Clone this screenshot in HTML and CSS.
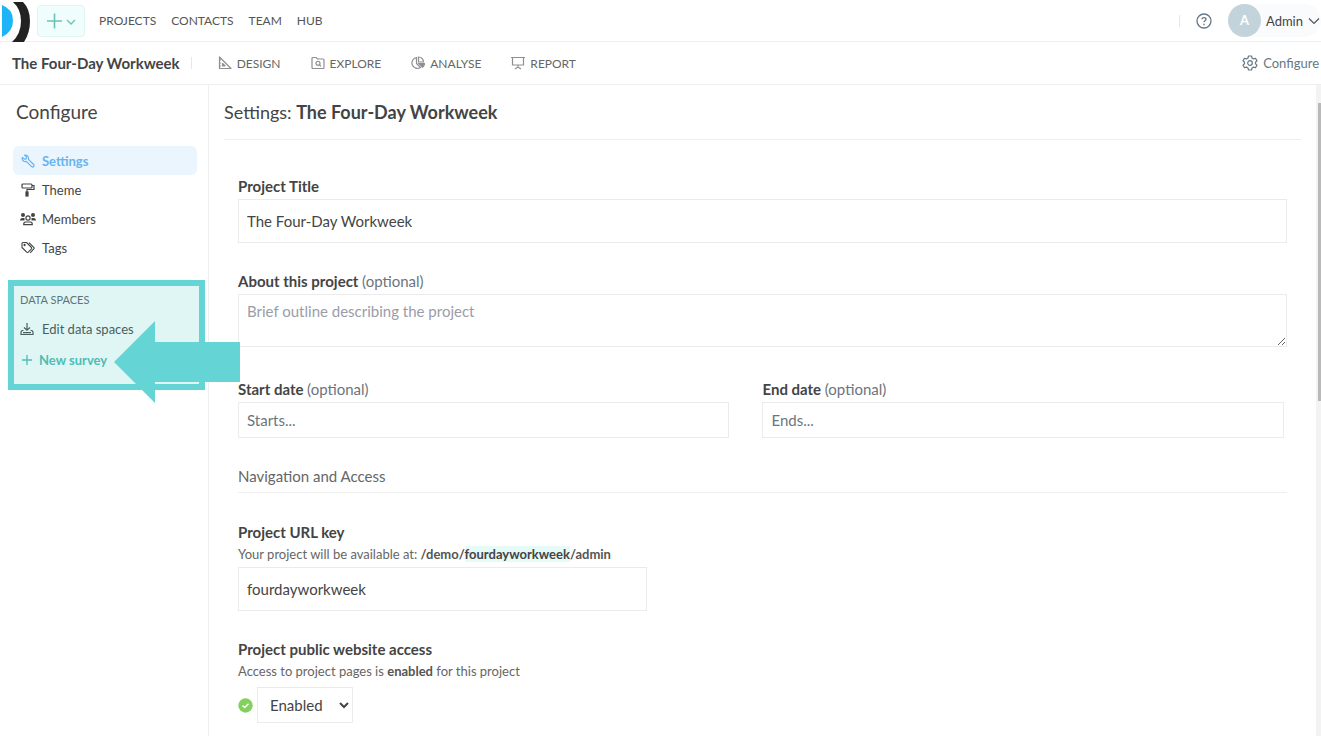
FILE: index.html
```html
<!DOCTYPE html>
<html lang="en">
<head>
  <meta charset="utf-8">
  <title>Configure - The Four-Day Workweek</title>
  <link rel="stylesheet" href="styles.css">
</head>
<body>
  <header class="topbar">
    <a class="logo" href="#" aria-label="Home">
      <svg width="30" height="42" viewBox="0 0 30 42">
        <path d="M2 5Q13 9 13 20.500Q13 32 2 37Z" fill="#1eb5f8"/>
        <path d="M13 2H23Q30 9 30 21Q30 33 24 42H12Q21 34 21 21Q21 9 13 2Z" fill="#222"/>
      </svg>
    </a>
    <button class="add-button" type="button" aria-label="Add">
      <svg width="32" height="18" viewBox="0 0 32 18" fill="none" stroke="#6fc0b6">
        <path d="M2 9H17M9.500 1.500V16.500" stroke-width="1.600"/>
        <path d="M22 8L26 12L30 8" stroke-width="1.300"/>
      </svg>
    </button>
    <nav class="main-nav">
      <a href="#">PROJECTS</a>
      <a href="#">CONTACTS</a>
      <a href="#">TEAM</a>
      <a href="#">HUB</a>
    </nav>
    <div class="user-area">
      <span class="divider"></span>
      <a class="help-link" href="#" aria-label="Help">
        <svg width="16" height="16" viewBox="0 0 16 16" fill="none" stroke="#667785" stroke-width="1.300">
          <circle cx="8" cy="8" r="7"/>
          <path d="M6 6.300C6 4 10 4 10 6.300C10 7.700 8 7.700 8 9.200M8 10.800V12.200"/>
        </svg>
      </a>
      <button class="user-button" type="button">
        <span class="avatar">A</span>
        <span>Admin</span>
        <svg width="12" height="8" viewBox="0 0 12 8" fill="none" stroke="#555" stroke-width="1.200"><path d="M1 1.500L6 6.500L11 1.500"/></svg>
      </button>
    </div>
  </header>

  <div class="projectbar">
    <strong class="project-name">The Four-Day Workweek</strong>
    <span class="divider"></span>
    <nav class="project-nav">
      <a href="#">
        <svg width="14" height="14" viewBox="0 0 14 14" fill="none" stroke="#8f8f8f" stroke-width="1.200" stroke-linejoin="round"><path d="M1.500 1V12.500H13ZM4.500 7.500V9.800H7ZM1.500 4H3M1.500 7H3M1.500 10H3"/></svg>
        DESIGN
      </a>
      <a href="#">
        <svg width="14" height="14" viewBox="0 0 14 14" fill="none" stroke="#8f8f8f" stroke-width="1.200"><path d="M1 2.500Q1 1.500 2 1.500H5L6.500 3H12Q13 3 13 4V11.500Q13 12.500 12 12.500H2Q1 12.500 1 11.500Z"/><circle cx="7" cy="7.300" r="2"/><path d="M8.500 8.800L10 10.300"/></svg>
        EXPLORE
      </a>
      <a href="#">
        <svg width="14" height="14" viewBox="0 0 14 14" fill="none" stroke="#8f8f8f" stroke-width="1.200"><path d="M5.500 1.500A5.500 5.500 0 1 0 9.500 11.500L5.500 7.500Z"/><path d="M7.500 1A5 5 0 0 1 12.500 6H7.500Z"/><path d="M8 7.500H13.500Q13.500 9.500 11.500 11.200Z" fill="#8f8f8f"/></svg>
        ANALYSE
      </a>
      <a href="#">
        <svg width="14" height="14" viewBox="0 0 14 14" fill="none" stroke="#8f8f8f" stroke-width="1.200"><path d="M0 1.500H14M1.500 1.500V9H12.500V1.500M7 9V11M4 13L7 11L10 13"/></svg>
        REPORT
      </a>
    </nav>
    <a class="configure-link" href="#">
      <svg width="16" height="16" viewBox="0 0 16 16" fill="none" stroke="#667785" stroke-width="1.200" stroke-linejoin="round"><path d="M6.500 1H9.500L10 3L11.500 3.900L13.500 3.300L15 5.900L13.500 7.300V8.700L15 10.100L13.500 12.700L11.500 12.100L10 13L9.500 15H6.500L6 13L4.500 12.100L2.500 12.700L1 10.100L2.500 8.700V7.300L1 5.900L2.500 3.300L4.500 3.900L6 3Z"/><circle cx="8" cy="8" r="2.300"/></svg>
      Configure
    </a>
  </div>

  <div class="page">
    <aside class="sidebar">
      <h2>Configure</h2>
      <nav class="side-nav">
        <a class="active" href="#">
          <svg width="14" height="14" viewBox="0 0 14 14" fill="none" stroke="#68b4ee" stroke-width="1.200" stroke-linejoin="round"><path d="M3.600 1.200L5.600 3.200L5.200 4.800L3.600 5.200L1.400 3.400Q.7 6.200 2.800 7.300Q4 7.800 5.300 7.400L10.600 12.600Q11.800 13.500 12.800 12.500Q13.500 11.500 12.600 10.500L7.500 5.400Q7.900 3.200 6.500 1.900Q5.300.8 3.600 1.200Z"/></svg>
          Settings
        </a>
        <a href="#">
          <svg width="14" height="14" viewBox="0 0 14 14" fill="none" stroke="#444" stroke-width="1.200"><rect x="1" y="1" width="10" height="4" rx="1"/><path d="M11 2.500H13V6.500H6V9"/><rect x="5" y="9" width="2" height="4" fill="#444"/></svg>
          Theme
        </a>
        <a href="#">
          <svg width="14" height="14" viewBox="1 0 14 14" fill="none" stroke="#444" stroke-width="1.200"><g fill="#444" stroke="none"><circle cx="3" cy="3" r="2"/><circle cx="13" cy="3" r="2"/><path d="M0 8.500Q0 6 2 6H4.500L4.500 8.500ZM16 8.500Q16 6 14 6H11.500V8.500Z"/></g><circle cx="8" cy="6" r="2.100"/><path d="M3.700 12.700Q3.700 10 5.500 10H10.500Q12.300 10 12.300 12.700Z"/></svg>
          Members
        </a>
        <a href="#">
          <svg width="14" height="14" viewBox="0 0 14 14" fill="none" stroke="#444" stroke-width="1.100" stroke-linejoin="round"><path d="M1 2.500Q1 1.500 2 1.500H5.500L10.500 6.500Q11 7.200 10.500 7.800L7 11.300Q6.300 11.700 5.700 11.200L1 6.500Z"/><path d="M8 1.700L13 6.600Q13.400 7.200 13 7.700L9.200 11.800"/><circle cx="3.600" cy="4" r=".6" fill="#444"/></svg>
          Tags
        </a>
      </nav>

      <section class="data-spaces">
        <h3>DATA SPACES</h3>
        <a class="edit-spaces" href="#">
          <svg width="14" height="14" viewBox="0 0 14 14" fill="none" stroke="#47605f" stroke-width="1.200"><path d="M7 1V8M4 5.500L7 8.300L10 5.500M3.500 8.500H2L1 10V12.500H13V10L12 8.500H10.500M3 10.700H11"/></svg>
          Edit data spaces
        </a>
        <a class="new-survey" href="#">
          <svg width="12" height="12" viewBox="0 0 12 12" stroke="#4fbdb4" stroke-width="1.300"><path d="M1 6H11M6 1V11"/></svg>
          New survey
        </a>
        <svg class="arrow" width="126" height="82" viewBox="0 0 126 82"><path d="M0 41L41 0V21H126V61H41V82Z" fill="#64d4d4"/></svg>
      </section>
    </aside>

    <main class="content">
      <h1>Settings: <strong>The Four-Day Workweek</strong></h1>

      <form class="settings-form">
        <div class="field">
          <label for="title">Project Title</label>
          <input class="tall" type="text" id="title" value="The Four-Day Workweek">
        </div>

        <div class="field">
          <label for="about">About this project <span>(optional)</span></label>
          <textarea id="about" placeholder="Brief outline describing the project"></textarea>
        </div>

        <div class="field dates">
          <div>
            <label for="start">Start date <span>(optional)</span></label>
            <input type="text" id="start" placeholder="Starts...">
          </div>
          <div>
            <label for="end">End date <span>(optional)</span></label>
            <input type="text" id="end" placeholder="Ends...">
          </div>
        </div>

        <h2>Navigation and Access</h2>

        <div class="field url-field">
          <label for="url-key">Project URL key</label>
          <p>Your project will be available at: <b>/demo/<mark>fourdayworkweek</mark>/admin</b></p>
          <input class="tall" type="text" id="url-key" value="fourdayworkweek">
        </div>

        <div class="field">
          <label for="access">Project public website access</label>
          <p>Access to project pages is <b>enabled</b> for this project</p>
          <div class="access-row">
            <svg width="15" height="15" viewBox="0 0 15 15"><circle cx="7.500" cy="7.500" r="7.200" fill="#82d15c"/><path d="M4.500 7.500L6.700 9.500L10.500 5.700" fill="none" stroke="#fff" stroke-width="1.500"/></svg>
            <select id="access">
              <option>Enabled</option>
              <option>Disabled</option>
            </select>
          </div>
        </div>
      </form>
    </main>

    <div class="scroll-track"><div class="scroll-thumb"></div></div>
  </div>
</body>
</html>
```
FILE: styles.css
```css
* {
  box-sizing: border-box;
}
body {
  display: flex;
  flex-direction: column;
  height: 100vh;
  margin: 0;
  overflow: hidden;
  font-family: Lato, sans-serif;
  font-size: 15px;
  color: #444;
  background: #fff;
}
h1, h2, h3, p {
  margin: 0;
  font-weight: normal;
}
a {
  color: inherit;
  text-decoration: none;
}
svg {
  display: block;
  flex: none;
}
button, input, textarea, select {
  font: inherit;
  color: inherit;
}
.divider {
  width: 1px;
  height: 12px;
  background: #e8e8e8;
}

/* top bars */
.topbar {
  display: flex;
  flex: none;
  align-items: center;
  height: 42px;
  border-bottom: 1px solid #eee;
}
.add-button {
  display: flex;
  align-items: center;
  justify-content: center;
  width: 48px;
  height: 32px;
  margin-left: 7px;
  padding: 0;
  background: #effefd;
  border: 1px solid #dff5f3;
  border-radius: 4px;
}
.main-nav {
  display: flex;
  gap: 15px;
  margin-left: 14px;
  font-size: 12px;
  color: #555;
}
.user-area {
  display: flex;
  align-items: center;
  gap: 16px;
  margin-left: auto;
}
.user-button {
  display: flex;
  align-items: center;
  gap: 5px;
  height: 33px;
  padding: 0 1px 0 0;
  font-size: 13px;
  background: #fafbfc;
  border: none;
  border-radius: 17px;
}
.avatar {
  width: 33px;
  height: 33px;
  font-weight: bold;
  line-height: 33px;
  color: #fff;
  background: #c3d3dc;
  border-radius: 50%;
}
.projectbar {
  display: flex;
  flex: none;
  align-items: center;
  height: 43px;
  padding: 0 2px 0 12px;
  border-bottom: 1px solid #eee;
}
.project-name {
  margin-right: 11px;
}
.project-nav {
  display: flex;
  gap: 30px;
  margin-left: 26px;
  font-size: 12px;
  color: #666;
}
.project-nav a {
  display: flex;
  align-items: center;
  gap: 5px;
}
.configure-link {
  display: flex;
  align-items: center;
  gap: 5px;
  margin-left: auto;
  font-size: 13px;
  color: #667785;
}

/* sidebar */
.page {
  display: flex;
  flex: 1;
  min-height: 0;
}
.sidebar {
  flex: none;
  width: 209px;
  border-right: 1px solid #eee;
}
.sidebar h2 {
  padding: 15px 16px 22px;
  font-size: 19px;
  line-height: 24px;
}
.side-nav {
  padding: 0 11px 0 13px;
}
.side-nav a {
  display: flex;
  align-items: center;
  gap: 7px;
  height: 29px;
  padding-left: 8px;
  font-size: 13px;
  border-radius: 6px;
}
.side-nav a svg {
  overflow: visible;
}
.side-nav .active {
  font-weight: bold;
  color: #68b4ee;
  background: #ebf5fe;
}
.data-spaces {
  position: relative;
  height: 110px;
  margin: 18px 3px 0 8px;
  padding: 6px 6px 0;
  background: #e0f6f5;
  border: 6px solid #64d4d4;
}
.data-spaces h3 {
  font-size: 11px;
  line-height: 16px;
  color: #5c7478;
}
.data-spaces a {
  display: flex;
  align-items: center;
  font-size: 13px;
  line-height: 18px;
}
.data-spaces .edit-spaces {
  gap: 8px;
  margin-top: 12px;
  color: #47605f;
}
.data-spaces .new-survey {
  gap: 6px;
  margin: 13px 0 0 1px;
  font-weight: bold;
  color: #4fbdb4;
}
.arrow {
  position: absolute;
  top: 35px;
  left: 100px;
}

/* settings form */
.content {
  flex: 1;
  min-width: 0;
  padding: 0 15px;
}
.content h1 {
  padding: 15px 0;
  font-size: 18px;
  line-height: 24px;
  border-bottom: 1px solid #eee;
}
.settings-form {
  padding: 36px 14px 0;
}
.field {
  margin-bottom: 28px;
}
.field label {
  display: block;
  margin-bottom: 3px;
  font-weight: bold;
  line-height: 20px;
}
.field label span {
  font-weight: normal;
  color: #6c757d;
}
.field p {
  margin-bottom: 4px;
  font-size: 13px;
  line-height: 18px;
  color: #666;
}
.field b {
  color: #555;
}
.field mark {
  color: #444;
  background: #e6faf8;
}
.field input, .field textarea, .field select {
  display: block;
  width: 100%;
  height: 36px;
  padding: 0 8px;
  background: #fff;
  border: 1px solid #ebebeb;
  border-radius: 0;
}
.field .tall {
  height: 44px;
}
.field textarea {
  height: 53px;
  margin-bottom: 32px;
  padding-top: 7px;
  resize: vertical;
}
.field textarea::placeholder {
  color: #9a9da8;
}
.field input::placeholder {
  color: #6c757d;
}
.dates {
  display: grid;
  grid-template-columns: 491fr 521fr;
  gap: 33px;
  padding-right: 3px;
}
.settings-form h2 {
  padding-bottom: 6px;
  margin-bottom: 29px;
  font-size: 15px;
  line-height: 20px;
  color: #666;
  border-bottom: 1px solid #eee;
}
.url-field input {
  width: 39%;
}
.access-row {
  display: flex;
  align-items: center;
  gap: 4px;
  padding-top: 3px;
}
.access-row select {
  width: 96px;
}

/* scrollbar */
.scroll-track {
  flex: none;
  width: 5px;
  padding: 18px 0 0 2px;
  background: #f3f3f3;
}
.scroll-thumb {
  height: 47%;
  background: #b9b9b9;
}
```
